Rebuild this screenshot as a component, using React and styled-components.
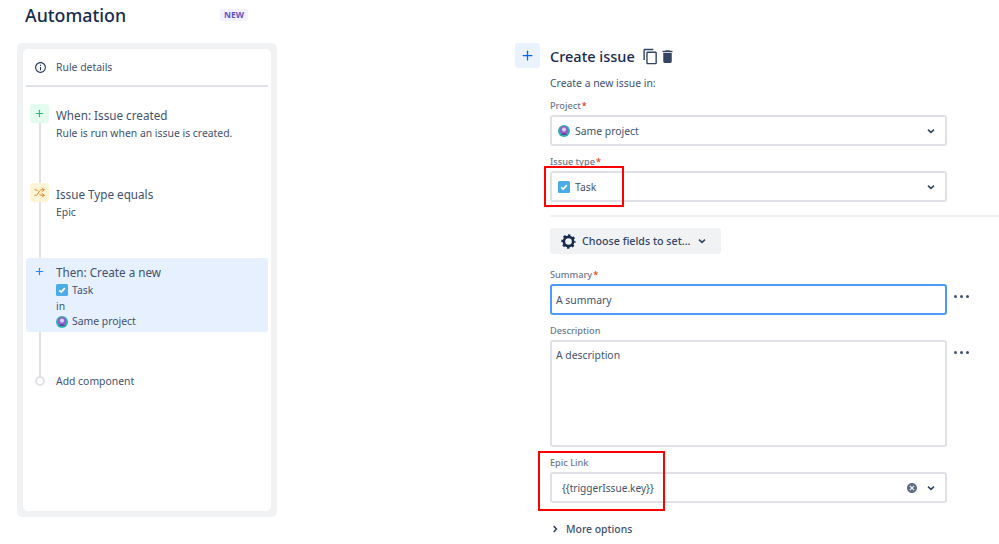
import styled, { createGlobalStyle } from "styled-components";
import { Plus, Shuffle } from "lucide-react";
import { MdContentCopy, MdDelete, MdCancel, MdInfoOutline } from "react-icons/md";

const GlobalStyle = createGlobalStyle`
  html, body {
    margin: 0;
    padding: 0;
    background: #fff;
  }
  body {
    width: 999px;
    height: 544px;
    overflow: hidden;
    font-family: "Noto Sans", "Open Sans", sans-serif;
    color: #42526e;
  }
`;

const Page = styled.div`
  position: relative;
  display: flex;
  width: 999px;
  height: 544px;
  overflow: hidden;
`;

/* left column */
const LeftColumn = styled.div`
  width: 515px;
  flex: none;
  padding-left: 17px;
  box-sizing: border-box;
`;

const PageHeader = styled.div`
  display: flex;
  align-items: center;
  height: 30px;
  padding-left: 8px;
  margin-bottom: 13px;
`;

const PageTitle = styled.h1`
  margin: 0;
  width: 195px;
  font-size: 17.8px;
  font-weight: 500;
  color: #172b4d;
`;

const Lozenge = styled.span`
  padding: 0 4px;
  height: 12px;
  line-height: 12px;
  border-radius: 2px;
  background: #f3f0ff;
  color: #6554c0;
  font-size: 8.5px;
  font-weight: 700;
`;

const RulePanel = styled.div`
  width: 260px;
  height: 474px;
  box-sizing: border-box;
  padding: 6px;
  border-radius: 5px;
  background: #f1f2f4;
`;

const RuleCard = styled.div`
  height: 100%;
  padding: 0 3px;
  box-sizing: border-box;
  background: #fff;
  border-radius: 5px;
`;

const DetailsRow = styled.div`
  display: flex;
  align-items: center;
  height: 36px;
  padding-left: 8px;
  gap: 9px;
  border-bottom: 2px solid #dfe1e6;
  font-size: 10.4px;
  margin-bottom: 17px;
  svg {
    color: #253858;
    font-size: 13px;
    width: 13px;
  }
`;

const Step = styled.div`
  display: flex;
  height: ${(p) => p.$height}px;
  padding-left: 4px;
  gap: 7px;
  box-sizing: border-box;
  border-radius: 3px;
  background: ${(p) => (p.$active ? "#e6f0fe" : "transparent")};
`;

const Rail = styled.div`
  display: flex;
  flex-direction: column;
  align-items: center;
  width: 19px;
  flex: none;
`;

const Tile = styled.div`
  display: flex;
  align-items: center;
  justify-content: center;
  width: 19px;
  height: 19px;
  flex: none;
  margin-top: ${(p) => p.$offset || 0}px;
  border-radius: 3px;
  background: ${(p) => p.$bg || "transparent"};
  color: ${(p) => p.$color};
`;

const RailLine = styled.div`
  flex: 1;
  width: 2px;
  background: #dfe1e6;
`;

const RailDot = styled.div`
  width: 6px;
  height: 6px;
  flex: none;
  border: 2px solid #dfe1e6;
  border-radius: 50%;
  background: #fff;
`;

const StepBody = styled.div`
  display: flex;
  flex-direction: column;
  padding-top: ${(p) => p.$top || 0}px;
`;

const StepTitle = styled.div`
  font-size: 11.7px;
  line-height: ${(p) => p.$line || 20}px;
`;

const StepLine = styled.div`
  display: flex;
  align-items: center;
  gap: 4px;
  font-size: 10.4px;
  line-height: ${(p) => p.$line || 16}px;
`;

/* right column */
const RightColumn = styled.div`
  flex: 1;
  padding-top: 43px;
  display: flex;
  gap: 10px;
`;

const AddTile = styled(Tile)`
  width: 25px;
  height: 25px;
  background: #e9f2fe;
  color: #0065ff;
`;

const Form = styled.div`
  flex: 1;
`;

const FormHeader = styled.div`
  display: flex;
  align-items: center;
  height: 26px;
  gap: 7px;
  margin-bottom: 6px;
`;

const FormTitle = styled.h2`
  margin: 0;
  font-size: 14.5px;
  font-weight: 500;
  color: #172b4d;
`;

const HeaderIcons = styled.div`
  display: flex;
  align-items: center;
  color: #344563;
  font-size: 17px;
`;

const Intro = styled.div`
  font-size: 10.4px;
  line-height: 16px;
  margin-bottom: 8px;
`;

const Label = styled.div`
  font-size: 9.2px;
  font-weight: 500;
  line-height: 14px;
  color: #6b778c;
  margin-bottom: 2px;
`;

const Required = styled.span`
  color: #de350b;
  margin-left: 1px;
`;

const FieldRow = styled.div`
  display: flex;
  gap: 6px;
  margin-bottom: ${(p) => p.$bottom ?? 9}px;
`;

const Control = styled.div`
  display: flex;
  align-items: ${(p) => (p.$multi ? "flex-start" : "center")};
  width: 397px;
  height: ${(p) => p.$height || 31}px;
  box-sizing: border-box;
  padding: ${(p) => (p.$multi ? "5px 9px" : "0 9px")};
  padding-left: ${(p) => p.$indent ?? 6}px;
  flex: none;
  gap: 5px;
  font-size: ${(p) => p.$size || 10.4}px;
  line-height: 16px;
  background: #fff;
  border: 2px solid ${(p) => (p.$focused ? "#4c9aff" : "#dfe1e6")};
  border-radius: 3px;
`;

const ControlText = styled.span`
  flex: 1;
`;

const ClearButton = styled.span`
  display: flex;
  margin-right: 3px;
  color: #5e6c84;
`;

const Dots = styled.div`
  display: flex;
  align-items: center;
  gap: 3px;
  height: 24px;
  margin-left: 1px;
  span {
    width: 3px;
    height: 3px;
    border-radius: 50%;
    background: #42526e;
  }
`;

const Divider = styled.div`
  height: 2px;
  background: #f1f2f4;
  margin: 13px 0 11px;
`;

const FieldsButton = styled.button`
  display: flex;
  align-items: center;
  gap: 6px;
  width: 171px;
  height: 26px;
  padding: 0 11px;
  border: 0;
  border-radius: 3px;
  background: #f1f2f4;
  color: #344563;
  font-family: inherit;
  font-size: 10.7px;
  font-weight: 500;
  margin-bottom: 14px;
`;

const MoreOptions = styled.div`
  display: flex;
  align-items: center;
  gap: 6px;
  margin-top: 18px;
  font-size: 10.4px;
  font-weight: 500;
  line-height: 16px;
  color: #42526e;
`;

const Highlight = styled.div`
  position: absolute;
  left: ${(p) => p.$x}px;
  top: ${(p) => p.$y}px;
  width: ${(p) => p.$w}px;
  height: ${(p) => p.$h}px;
  box-sizing: border-box;
  border: 2px solid #f00;
`;

const Chevron = ({ dir = "down" }) => (
  <svg width="10" height="10" viewBox="0 0 10 10" style={{ flex: "none" }}>
    <path
      d={dir === "down" ? "M2 3.7 L5 6.4 L8 3.7" : "M3.7 2 L6.4 5 L3.7 8"}
      fill="none"
      stroke="#344563"
      strokeWidth="1.6"
    />
  </svg>
);

const GearIcon = () => (
  <svg width="15" height="15" viewBox="0 0 15 15" style={{ flex: "none" }}>
    <circle cx="7.5" cy="7.5" r="4.6" fill="none" stroke="#172b4d" strokeWidth="2.6" />
    <circle
      cx="7.5"
      cy="7.5"
      r="6.2"
      fill="none"
      stroke="#172b4d"
      strokeWidth="2"
      strokeDasharray="2.4 2.47"
      strokeDashoffset="1.2"
    />
  </svg>
);

const TaskIcon = () => (
  <svg width="12" height="12" viewBox="0 0 12 12" style={{ flex: "none" }}>
    <rect width="12" height="12" rx="1.5" fill="#4bade8" />
    <path d="M3.2 6.3 L5.2 8.1 L8.8 4.1" fill="none" stroke="#fff" strokeWidth="1.6" />
  </svg>
);

const ProjectIcon = () => (
  <svg width="12" height="12" viewBox="0 0 12 12" style={{ flex: "none" }}>
    <circle cx="6" cy="6" r="6" fill="#2fb5a8" />
    <circle cx="6" cy="5.4" r="4.4" fill="#8a63c9" />
    <circle cx="6" cy="4.6" r="2.1" fill="#d9cdf0" />
    <path d="M3 10 C4 7.5 8 7.5 9 10 Z" fill="#5b3ea6" />
  </svg>
);

const MoreDots = () => (
  <Dots>
    <span />
    <span />
    <span />
  </Dots>
);

const App = () => (
  <>
    <GlobalStyle />
    <Page>
      <LeftColumn>
        <PageHeader>
          <PageTitle>Automation</PageTitle>
          <Lozenge>NEW</Lozenge>
        </PageHeader>
        <RulePanel>
          <RuleCard>
            <DetailsRow>
              <MdInfoOutline />
              <span>Rule details</span>
            </DetailsRow>

            <Step $height={79}>
              <Rail>
                <Tile $bg="#e3fcef" $color="#36b37e">
                  <Plus size={11} strokeWidth={2.5} />
                </Tile>
                <RailLine />
              </Rail>
              <StepBody $top={1}>
                <StepTitle>When: Issue created</StepTitle>
                <StepLine>Rule is run when an issue is created.</StepLine>
              </StepBody>
            </Step>

            <Step $height={75}>
              <Rail>
                <Tile $bg="#fff4d6" $color="#e07b1a">
                  <Shuffle size={11} strokeWidth={2} />
                </Tile>
                <RailLine />
              </Rail>
              <StepBody $top={1}>
                <StepTitle>Issue Type equals</StepTitle>
                <StepLine>Epic</StepLine>
              </StepBody>
            </Step>

            <Step $height={74} $active>
              <Rail>
                <Tile $color="#2684ff" $offset={4}>
                  <Plus size={11} strokeWidth={2.5} />
                </Tile>
              </Rail>
              <StepBody $top={5}>
                <StepTitle $line={19}>Then: Create a new</StepTitle>
                <StepLine>
                  <TaskIcon />
                  Task
                </StepLine>
                <StepLine>in</StepLine>
                <StepLine $line={15}>
                  <ProjectIcon />
                  Same project
                </StepLine>
              </StepBody>
            </Step>

            <Step $height={54}>
              <Rail>
                <RailLine />
                <RailDot />
              </Rail>
              <StepBody $top={41}>
                <StepLine>Add component</StepLine>
              </StepBody>
            </Step>
          </RuleCard>
        </RulePanel>
      </LeftColumn>

      <RightColumn>
        <AddTile>
          <Plus size={15} strokeWidth={2} />
        </AddTile>
        <Form>
          <FormHeader>
            <FormTitle>Create issue</FormTitle>
            <HeaderIcons>
              <MdContentCopy />
              <MdDelete />
            </HeaderIcons>
          </FormHeader>
          <Intro>Create a new issue in:</Intro>

          <Label>
            Project<Required>*</Required>
          </Label>
          <FieldRow>
            <Control>
              <ProjectIcon />
              <ControlText>Same project</ControlText>
              <Chevron />
            </Control>
          </FieldRow>

          <Label>
            Issue type<Required>*</Required>
          </Label>
          <FieldRow $bottom={0}>
            <Control>
              <TaskIcon />
              <ControlText>Task</ControlText>
              <Chevron />
            </Control>
          </FieldRow>

          <Divider />

          <FieldsButton>
            <GearIcon />
            Choose fields to set...
            <Chevron />
          </FieldsButton>

          <Label>
            Summary<Required>*</Required>
          </Label>
          <FieldRow>
            <Control $focused $indent={4}>
              <ControlText>A summary</ControlText>
            </Control>
            <MoreDots />
          </FieldRow>

          <Label>Description</Label>
          <FieldRow>
            <Control $multi $height={107} $indent={4}>
              <ControlText>A description</ControlText>
            </Control>
            <MoreDots />
          </FieldRow>

          <Label>Epic Link</Label>
          <FieldRow $bottom={0}>
            <Control $indent={10} $size={10.1}>
              <ControlText>{"{{triggerIssue.key}}"}</ControlText>
              <ClearButton>
                <MdCancel size={12} />
              </ClearButton>
              <Chevron />
            </Control>
          </FieldRow>

          <MoreOptions>
            <Chevron dir="right" />
            More options
          </MoreOptions>
        </Form>
      </RightColumn>

      <Highlight $x={544} $y={166} $w={80} $h={41} />
      <Highlight $x={538} $y={451} $w={127} $h={60} />
    </Page>
  </>
);

export default App;
